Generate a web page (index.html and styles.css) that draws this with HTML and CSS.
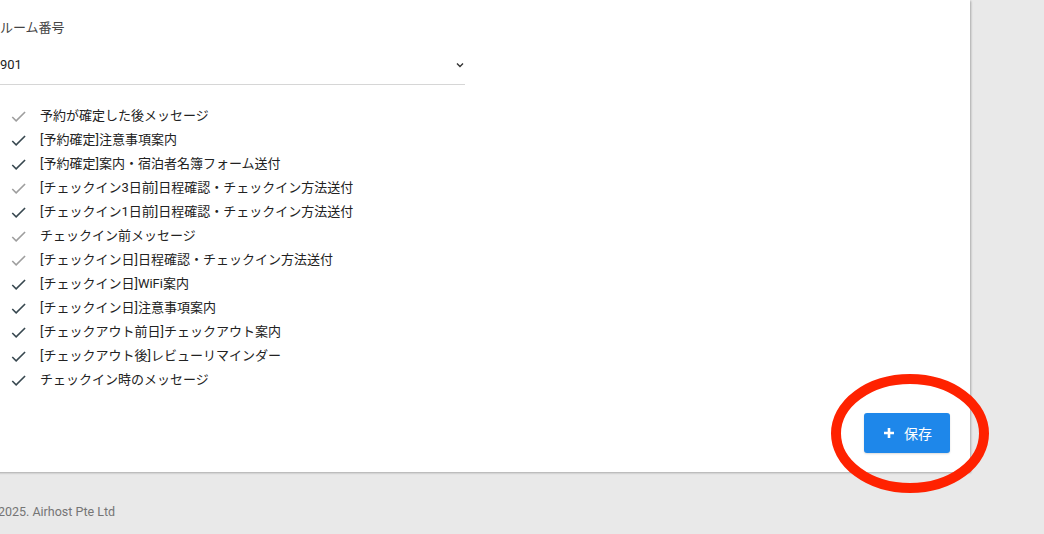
FILE: index.html
```html
<!DOCTYPE html>
<html lang="ja">
<head>
<meta charset="utf-8">
<link rel="stylesheet" href="styles.css">
</head>
<body>
<div class="page">
  <div class="card">
    <div class="field-label">ルーム番号</div>
    <div class="select">
      <span class="select-value">901</span>
      <svg class="chevron" width="8" height="6" viewBox="0 0 8 6"><path d="M1 1.5 L4 4.5 L7 1.5" fill="none" stroke="#333" stroke-width="1.4"/></svg>
    </div>
    <ul class="checklist">
      <li class="item light"><svg class="check" viewBox="0 0 24 24"><path d="M9 16.17L4.83 12l-1.42 1.41L9 19 21 7l-1.41-1.41z"/></svg><span>予約が確定した後メッセージ</span></li>
      <li class="item"><svg class="check" viewBox="0 0 24 24"><path d="M9 16.17L4.83 12l-1.42 1.41L9 19 21 7l-1.41-1.41z"/></svg><span>[予約確定]注意事項案内</span></li>
      <li class="item"><svg class="check" viewBox="0 0 24 24"><path d="M9 16.17L4.83 12l-1.42 1.41L9 19 21 7l-1.41-1.41z"/></svg><span>[予約確定]案内・宿泊者名簿フォーム送付</span></li>
      <li class="item light"><svg class="check" viewBox="0 0 24 24"><path d="M9 16.17L4.83 12l-1.42 1.41L9 19 21 7l-1.41-1.41z"/></svg><span>[チェックイン3日前]日程確認・チェックイン方法送付</span></li>
      <li class="item"><svg class="check" viewBox="0 0 24 24"><path d="M9 16.17L4.83 12l-1.42 1.41L9 19 21 7l-1.41-1.41z"/></svg><span>[チェックイン1日前]日程確認・チェックイン方法送付</span></li>
      <li class="item light"><svg class="check" viewBox="0 0 24 24"><path d="M9 16.17L4.83 12l-1.42 1.41L9 19 21 7l-1.41-1.41z"/></svg><span>チェックイン前メッセージ</span></li>
      <li class="item light"><svg class="check" viewBox="0 0 24 24"><path d="M9 16.17L4.83 12l-1.42 1.41L9 19 21 7l-1.41-1.41z"/></svg><span>[チェックイン日]日程確認・チェックイン方法送付</span></li>
      <li class="item"><svg class="check" viewBox="0 0 24 24"><path d="M9 16.17L4.83 12l-1.42 1.41L9 19 21 7l-1.41-1.41z"/></svg><span>[チェックイン日]WiFi案内</span></li>
      <li class="item"><svg class="check" viewBox="0 0 24 24"><path d="M9 16.17L4.83 12l-1.42 1.41L9 19 21 7l-1.41-1.41z"/></svg><span>[チェックイン日]注意事項案内</span></li>
      <li class="item"><svg class="check" viewBox="0 0 24 24"><path d="M9 16.17L4.83 12l-1.42 1.41L9 19 21 7l-1.41-1.41z"/></svg><span>[チェックアウト前日]チェックアウト案内</span></li>
      <li class="item"><svg class="check" viewBox="0 0 24 24"><path d="M9 16.17L4.83 12l-1.42 1.41L9 19 21 7l-1.41-1.41z"/></svg><span>[チェックアウト後]レビューリマインダー</span></li>
      <li class="item"><svg class="check" viewBox="0 0 24 24"><path d="M9 16.17L4.83 12l-1.42 1.41L9 19 21 7l-1.41-1.41z"/></svg><span>チェックイン時のメッセージ</span></li>
    </ul>
    <div class="actions">
      <button class="save-btn" type="button">
        <svg class="plus" width="10" height="10" viewBox="0 0 10 10"><path d="M5 0v10M0 5h10" stroke="#fff" stroke-width="2.6"/></svg>
        <span>保存</span>
      </button>
    </div>
  </div>
  <div class="footer">© 2025. Airhost Pte Ltd</div>
  <svg class="annotation" width="168" height="130" viewBox="0 0 168 130"><ellipse cx="84" cy="64.5" rx="74" ry="54.5" fill="none" stroke="#ff2200" stroke-width="10"/></svg>
</div>
</body>
</html>
```
FILE: styles.css
```css
html, body {
  margin: 0;
  padding: 0;
}
body {
  background: #e9e9e9;
  font-family: Roboto, "Noto Sans CJK JP", "Noto Sans", sans-serif;
  color: #333;
  overflow: hidden;
}
.page {
  position: relative;
  width: 1044px;
  height: 534px;
}
.card {
  background: #fff;
  margin-left: -24px;
  width: 994px;
  box-sizing: border-box;
  padding: 18px 20px 19px 24px;
  box-shadow: 1px 1px 2px rgba(0,0,0,0.28);
  display: flex;
  flex-direction: column;
}
.field-label {
  font-size: 13px;
  line-height: 20px;
  height: 20px;
  color: #444;
}
.select {
  margin-top: 17px;
  width: 465px;
  height: 29px;
  border-bottom: 1px solid #d6d6d6;
  display: flex;
  align-items: flex-start;
  justify-content: space-between;
  box-sizing: content-box;
}
.select-value {
  font-size: 13px;
  line-height: 20px;
  color: #222;
}
.chevron {
  margin-top: 7px;
  margin-right: 1px;
}
.checklist {
  list-style: none;
  margin: 17px 0 0 0;
  padding: 0;
  display: flex;
  flex-direction: column;
}
.item {
  height: 24px;
  display: flex;
  align-items: center;
  font-size: 13px;
  color: #222;
}
.check {
  width: 19px;
  height: 19px;
  margin-left: 9px;
  margin-right: 12px;
  margin-top: 5px;
  fill: #37474f;
  flex: none;
}
.item.light .check {
  fill: #9e9e9e;
}
.actions {
  margin-top: 23px;
  display: flex;
  justify-content: flex-end;
}
.save-btn {
  width: 86px;
  height: 40px;
  border: none;
  border-radius: 3px;
  background: #1e87ea;
  color: #fff;
  font-family: Roboto, "Noto Sans CJK JP", sans-serif;
  font-size: 14px;
  display: flex;
  align-items: center;
  justify-content: center;
  gap: 10px;
  padding: 0 0 0 2px;
  box-shadow: 0 1px 2px rgba(0,0,0,0.15);
}
.footer {
  margin-left: -15px;
  margin-top: 32px;
  font-size: 12.5px;
  line-height: 16px;
  color: #757575;
}
.annotation {
  position: absolute;
  left: 826px;
  top: 369px;
}
```
